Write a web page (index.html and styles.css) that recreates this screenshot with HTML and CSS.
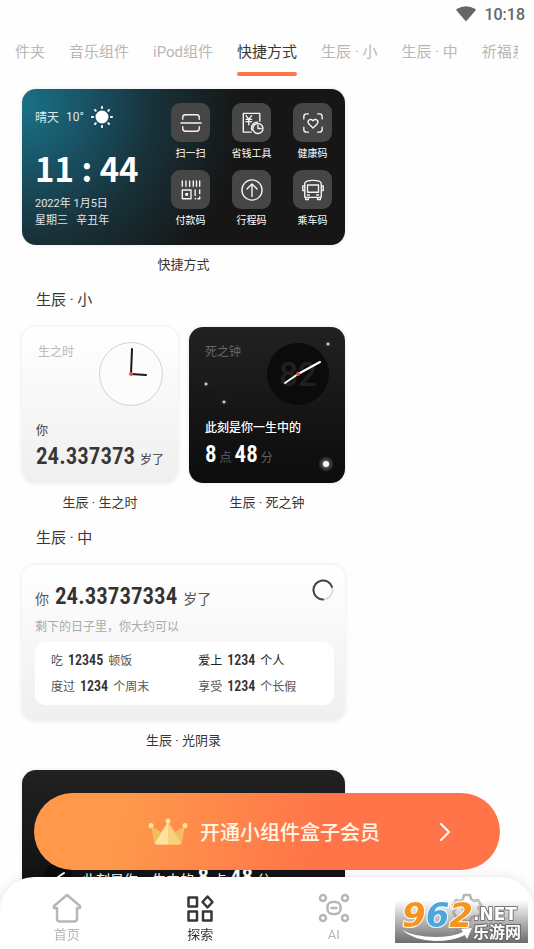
FILE: index.html
```html
<!DOCTYPE html>
<html lang="zh-CN">
<head>
<meta charset="utf-8">
<meta name="viewport" content="width=device-width, initial-scale=1">
<title>小组件盒子</title>
<link rel="stylesheet" href="styles.css">
</head>
<body>
<header class="status">
  <svg class="wifi" viewBox="0 0 20 16" aria-hidden="true"><path d="M10 15.500 0.500 4.500Q0 3.500 1 2.800Q10-2.500 19 2.800Q20 3.500 19.500 4.500Z"/></svg>
  <span>10:18</span>
</header>
<nav class="tabs">
  <div class="tabs-track">
    <a href="#">件夹</a>
    <a href="#">音乐组件</a>
    <a href="#">iPod组件</a>
    <a href="#" class="active">快捷方式</a>
    <a href="#">生辰 · 小</a>
    <a href="#">生辰 · 中</a>
    <a href="#">祈福系</a>
  </div>
</nav>
<main class="feed">
  <figure class="item">
    <div class="card shortcut">
      <div class="today">
        <p class="weather"><span>晴天</span><span>10°</span>
          <svg class="sun" viewBox="0 0 22 22" aria-hidden="true"><circle cx="11" cy="11" r="5.500"/><path d="M11 1v1M11 20v1M1 11h1M20 11h1M4 4l.700.700M17.300 17.300l.700.700M4 18l.700-.700M17.300 4.700l.700-.700"/></svg>
        </p>
        <p class="time">11 : 44</p>
        <p class="date">2022年 1月5日</p>
        <p class="date">星期三&ensp; 辛丑年</p>
      </div>
      <div class="apps">
        <div class="app"><span class="tile"><svg viewBox="0 0 24 24"><path d="M3 8V6q0-3 3-3h12q3 0 3 3v2M1 12h22M3 16v2q0 3 3 3h12q3 0 3-3v-2"/></svg></span>扫一扫</div>
        <div class="app"><span class="tile"><svg viewBox="0 0 24 24"><path d="M11 22H2.500V1.500h18V10M5.500 4l3 4 3-4M5.500 8h6M5.500 10.500h6M8.500 8v6"/><path d="M12 20a6.500 6.500 0 0 1 6-9"/><circle cx="18.500" cy="18" r="5.500"/><path d="M18.500 14.500V18H22"/></svg></span>省钱工具</div>
        <div class="app"><span class="tile"><svg viewBox="0 0 24 24"><path d="M2 7.500V5q0-3 3-3h2M17 2h2q3 0 3 3v2.500M22 16.500V19q0 3-3 3h-2M7 22H5q-3 0-3-3v-2.500M12 17.500 7.500 13C5 10 9 6 12 9.500 15 6 19 10 16.500 13Z"/></svg></span>健康码</div>
        <div class="app"><span class="tile"><svg viewBox="0 0 24 24"><path d="M2.500 2v6M6.500 2v6M10.500 2v6M14.500 2v6M18 2v6M21.500 2v6M2.500 12h9.500v9.500H2.500ZM16.500 12v6M21.500 12v4M16.500 21.500h.500M21.500 19.500v2h-2"/><path class="solid" d="M5.800 15.300h3v3h-3Z"/></svg></span>付款码</div>
        <div class="app"><span class="tile"><svg viewBox="0 0 24 24"><circle cx="12" cy="12" r="11"/><path d="M12 19V6M6.500 11 12 5.500l5.500 5.500"/></svg></span>行程码</div>
        <div class="app"><span class="tile"><svg viewBox="0 0 24 24"><path d="M3 20V5q0-3.500 9-3.500T21 5v15ZM6 6.500h12v8H6ZM3 7.500H.800v5H3M21 7.500h2.200v5H21M4 20v2.500h3V20M17 20v2.500h3V20M6 17.500h2M16 17.500h2"/></svg></span>乘车码</div>
      </div>
    </div>
    <figcaption>快捷方式</figcaption>
  </figure>

  <h2>生辰 · 小</h2>
  <div class="pair">
    <figure class="item">
      <div class="card small light">
        <div class="top"><span class="label">生之时</span>
          <svg class="clock" viewBox="0 0 64 64" aria-hidden="true"><circle class="dial" cx="32" cy="32" r="31.500"/><path class="minute" d="M32 32 33 7"/><path class="hour" d="M32 32 47 33"/><circle class="pin" cx="32" cy="32" r="2"/></svg>
        </div>
        <p class="lead">你</p>
        <p class="count"><b>24.337373</b><span>岁了</span></p>
      </div>
      <figcaption>生辰 · 生之时</figcaption>
    </figure>
    <figure class="item">
      <div class="card small dark">
        <svg class="stars" viewBox="0 0 156 156" aria-hidden="true">
          <defs><radialGradient id="glow"><stop offset="0" stop-color="#fff" stop-opacity=".5"/><stop offset="1" stop-color="#fff" stop-opacity="0"/></radialGradient></defs>
          <g fill="url(#glow)"><circle cx="139" cy="17" r="3"/><circle cx="17" cy="57" r="3"/><circle cx="35" cy="75" r="3"/><circle cx="137" cy="137" r="8"/></g>
          <g fill="#fff"><circle cx="139" cy="17" r="1"/><circle cx="17" cy="57" r="1"/><circle cx="35" cy="75" r="1"/><circle cx="137" cy="137" r="3"/></g>
        </svg>
        <div class="top"><span class="label">死之钟</span>
          <svg class="clock" viewBox="0 0 64 64" aria-hidden="true"><circle class="dial" cx="32" cy="32" r="31"/><text x="32" y="44">82</text><path class="hour" d="M32 32 19 41"/><path class="minute" d="M32 32 54 20"/><circle class="pin" cx="32" cy="32" r="2"/></svg>
        </div>
        <p class="lead">此刻是你一生中的</p>
        <p class="count"><b>8</b><span>点</span><b>48</b><span>分</span></p>
      </div>
      <figcaption>生辰 · 死之钟</figcaption>
    </figure>
  </div>

  <h2>生辰 · 中</h2>
  <figure class="item">
    <div class="card medium">
      <div class="age"><span>你</span><b>24.33737334</b><span>岁了</span>
        <svg class="ring" viewBox="0 0 22 22" aria-hidden="true"><circle cx="11" cy="11" r="9.500"/><path d="M11 20.500A9.500 9.500 0 1 1 20 8"/></svg>
      </div>
      <p class="hint">剩下的日子里，你大约可以</p>
      <div class="facts">
        <p>吃 <b>12345</b> 顿饭</p><p class="strong">爱上 <b>1234</b> 个人</p>
        <p>度过 <b>1234</b> 个周末</p><p>享受 <b>1234</b> 个长假</p>
      </div>
    </div>
    <figcaption>生辰 · 光阴录</figcaption>
  </figure>

  <div class="card next">
    <svg class="clock" viewBox="0 0 28 28" aria-hidden="true"><circle class="dial" cx="14" cy="14" r="14"/><path class="minute" d="M14 14 20 10"/></svg>
    <p>此刻是你一生中的 <b>8</b> 点 <b>48</b> 分</p>
  </div>
</main>

<div class="dock">
  <button class="vip" type="button">
    <svg class="crown" viewBox="0 0 40 28" aria-hidden="true">
      <path fill="#f2bd5c" d="M3 8 13 14 20 4 27 14 37 8 34 24Q33.500 26.500 31 26.500H9Q6.500 26.500 6 24Z"/>
      <path fill="#fde2a0" d="M20 4 6.500 25.500Q7.500 26.500 9 26.500H20Z"/><path fill="#f9d07c" d="M20 4V26.500H31Q32.500 26.500 33.500 25.500Z"/>
      <g fill="#fde2a0"><circle cx="20" cy="3" r="2.500"/><circle cx="3" cy="7.500" r="2.500"/><circle cx="37" cy="7.500" r="2.500"/></g>
    </svg>
    <span>开通小组件盒子会员</span>
    <svg class="chevron" viewBox="0 0 12 20" aria-hidden="true"><path d="M2 2 10 10 2 18"/></svg>
  </button>
  <nav class="bottom">
    <a href="#"><svg viewBox="0 0 32 32"><path d="M16 3 29 14Q30 16.500 27 16H26V26.500Q26 29.500 23 29.500H9Q6 29.500 6 26.500V16H5Q2 16.500 3 14Z"/></svg>首页</a>
    <a href="#" class="active"><svg viewBox="0 0 32 32"><path d="M4.500 5.500h8.500v9H4.500ZM4.500 19.500h8.500v9H4.500ZM19 19.500h8.500v9H19ZM23.500 4.500 28.500 10 23.500 15.500 18.500 10Z"/></svg>探索</a>
    <a href="#"><svg viewBox="0 0 32 32"><circle cx="5" cy="6" r="3"/><circle cx="27" cy="6" r="3"/><circle cx="5" cy="26" r="3"/><circle cx="27" cy="26" r="3"/><rect x="9.500" y="10" width="13" height="12" rx="5"/><path d="M13.500 16h5"/></svg>AI</a>
    <a href="#"><svg viewBox="0 0 32 32"><path d="M13 3h6l1 4 3 2 4-1 3 5-3 3 3 4-3 5-4-1-3 2-1 3h-6l-1-3-3-2-4 1-3-5 3-4-3-3 3-5 4 1 3-2Z"/><circle cx="16" cy="16" r="4"/></svg>设置</a>
  </nav>
  <div class="mark">
    <svg viewBox="0 0 133 43" aria-hidden="true">
      <text class="num" x="7" y="27"><tspan fill="#f7941d">9</tspan><tspan fill="#4ba6dc">6</tspan><tspan fill="#f7941d">2</tspan></text>
      <text class="net" x="78" y="20">.NET</text>
      <path class="swoosh" d="M7 30Q20 37 40 37 58 37 68 32L66 29 77 28 72 39 70 35Q58 41 40 41 18 40 7 30Z"/>
      <text class="site" x="78" y="38">乐游网</text>
    </svg>
  </div>
</div>
</body>
</html>
```
FILE: styles.css
```css
* { box-sizing: border-box; }
html { overflow: hidden; }
body {
  margin: 0;
  height: 100vh;
  overflow: hidden;
  background: #fefefe;
  color: #3a3633;
  font-family: Roboto, "Noto Sans CJK SC", sans-serif;
  font-size: 13px;
}
p, h2, figure { margin: 0; }
a { color: inherit; text-decoration: none; }
svg { display: block; flex: none; fill: none; stroke-linecap: round; stroke-linejoin: round; }
b { font-family: "Roboto Condensed", "Liberation Sans Narrow", Roboto, sans-serif; font-weight: 600; }

.status {
  display: flex;
  justify-content: flex-end;
  align-items: center;
  gap: 8px;
  height: 28px;
  padding: 0 9px;
  color: #666;
  font-size: 16px;
  font-weight: 500;
}
.wifi { width: 20px; height: 16px; fill: #666; }

.tabs { padding: 0 16px 0 15px; }
.tabs-track { display: flex; gap: 24px; overflow: hidden; }
.tabs a {
  flex: none;
  height: 48px;
  line-height: 48px;
  font-size: 15px;
  white-space: nowrap;
  color: #b9b6b3;
}
.tabs .active { position: relative; color: #3a3633; }
.tabs .active::after {
  content: "";
  position: absolute;
  left: 0;
  right: 0;
  bottom: 0;
  height: 4px;
  border-radius: 2px;
  background: #ff7548;
}

.feed { max-width: 345px; padding: 13px 0 0 22px; }
.card { border-radius: 14px; box-shadow: 0 0 4px rgba(80, 50, 40, .12); overflow: hidden; }
figcaption { height: 38px; line-height: 40px; text-align: center; }
h2 { height: 44px; padding: 0 14px; line-height: 34px; font-size: 15px; font-weight: 400; }

.shortcut {
  display: flex;
  gap: 16px;
  height: 156px;
  padding: 14px 13px 0 13px;
  color: #fff;
  background: radial-gradient(circle at 0 10%, #1a7187 0, #195466 18%, #183139 38%, #161616 62%);
}
.today { flex: 1; white-space: nowrap; }
.weather { display: flex; align-items: center; gap: 7px; height: 27px; font-size: 12px; color: #dfeaec; }
.sun { width: 22px; height: 22px; fill: #fff; stroke: #fff; stroke-width: 2; }
.time { height: 65px; font: 700 33px/76px "Noto Sans CJK SC", sans-serif; }
.date { font-size: 11px; line-height: 17px; color: #e4e4e4; }
.apps { display: grid; grid-template-columns: repeat(3, 39px); column-gap: 22px; row-gap: 4px; align-content: start; }
.app { display: flex; flex-direction: column; align-items: center; font-size: 10px; line-height: 24px; white-space: nowrap; }
.tile { display: grid; place-items: center; width: 39px; height: 39px; border-radius: 9px; background: #464646; }
.tile svg { width: 22px; height: 22px; stroke: #f4f4f4; stroke-width: 1.5; overflow: visible; }
.tile .solid { fill: #fff; stroke: none; }

.pair { display: grid; grid-template-columns: repeat(2, minmax(0, 1fr)); gap: 11px; }
.small { position: relative; height: 156px; padding: 15px 15px 0 14px; }
.light, .medium { background: linear-gradient(#fff, #efefef); }
.dark, .next { color: #fff; background: linear-gradient(#212121, #0c0c0c); }
.top { display: flex; justify-content: space-between; height: 77px; }
.dark .top { height: 74px; }
.label { padding-left: 2px; font-size: 12px; line-height: 20px; color: #b8b8b8; }
.dark .label { color: #666; }
.clock { width: 64px; height: 64px; }
.dial { stroke: #d2d2d2; fill: #fcfcfc; }
.minute { stroke: #181818; stroke-width: 2; }
.hour { stroke: #181818; stroke-width: 2; }
.pin { fill: #df5548; }
.dark .dial, .next .dial { fill: #0b0b0b; stroke: none; }
.dark .minute, .dark .hour, .next .minute { stroke: #fff; }
.dark text { fill: #202020; font: 500 33px Roboto, sans-serif; text-anchor: middle; }
.stars { position: absolute; inset: 0; width: 100%; height: 100%; }
.lead { font-size: 12px; line-height: 24px; }
.dark .lead { padding-left: 2px; font-weight: 500; }
.count { display: flex; align-items: baseline; gap: 5px; font-size: 12px; line-height: 28px; white-space: nowrap; }
.count b { font-size: 23px; }
.dark .count { gap: 3px; padding-left: 2px; line-height: 30px; color: #626262; }
.dark .count b { color: #fff; }

.medium { height: 156px; padding: 14px 11px 0 13px; }
.age { display: flex; align-items: baseline; gap: 6px; height: 36px; font-size: 14px; line-height: 36px; color: #555; }
.age b { font-size: 23px; color: #333; }
.ring { width: 22px; height: 22px; margin-left: auto; align-self: flex-start; }
.ring circle { stroke: #ddd; stroke-width: 2; }
.ring path { stroke: #44424c; stroke-width: 2; }
.hint { font-size: 12px; line-height: 24px; color: #aaa; }
.facts {
  display: grid;
  grid-template-columns: 13fr 12fr;
  align-content: center;
  height: 63px;
  margin-top: 3px;
  padding: 0 0 0 16px;
  border-radius: 10px;
  background: #fff;
  font-size: 12px;
  line-height: 25px;
  color: #555;
}
.facts b { padding: 0 2px; font-size: 14px; color: #333; }
.facts .strong { color: #222; }

.next { display: flex; align-items: center; gap: 10px; height: 156px; margin-top: 11px; padding: 58px 12px 0 22px; }
.next .clock { width: 28px; height: 28px; }
.next p { font-size: 14px; white-space: nowrap; }
.next b { font-size: 23px; }

.dock { position: fixed; left: 0; right: 0; bottom: 0; }
.vip {
  display: flex;
  align-items: center;
  gap: 12px;
  width: calc(100% - 68px);
  height: 77px;
  margin: 0 34px 7px;
  padding: 0 49px 0 114px;
  border: 0;
  border-radius: 39px;
  background: linear-gradient(105deg, #ff984b 20%, #ff7549 60%);
  color: #fff4e6;
  font: 500 20px "Noto Sans CJK SC", sans-serif;
  white-space: nowrap;
}
.crown { width: 40px; height: 28px; }
.chevron { width: 12px; height: 20px; margin-left: auto; stroke: #fff; stroke-width: 2; }
.bottom {
  display: grid;
  grid-template-columns: repeat(4, 1fr);
  height: 72px;
  padding-top: 15px;
  border-radius: 34px 34px 0 0;
  background: #fff;
  box-shadow: 0 0 12px rgba(0, 0, 0, .1);
}
.bottom a { display: flex; flex-direction: column; align-items: center; line-height: 22px; color: #b9b6b3; }
.bottom .active { color: #3a3633; }
.bottom svg { width: 32px; height: 32px; stroke: currentColor; stroke-width: 2.5; }
.mark {
  position: absolute;
  right: 6px;
  bottom: 6px;
  width: 133px;
  height: 43px;
  background: linear-gradient(rgba(255, 255, 255, .2), rgba(100, 100, 100, .95));
}
.mark text { paint-order: stroke; stroke: #fff; stroke-width: 2; }
.mark .num { font: italic 700 34px "DejaVu Sans", sans-serif; }
.mark .net { font: 700 17px "DejaVu Sans", sans-serif; fill: #fff; stroke: #777; }
.mark .site { font: 700 16px "Noto Sans CJK SC", sans-serif; fill: #fff; stroke: #666; }
.swoosh { fill: #fff; }
```
